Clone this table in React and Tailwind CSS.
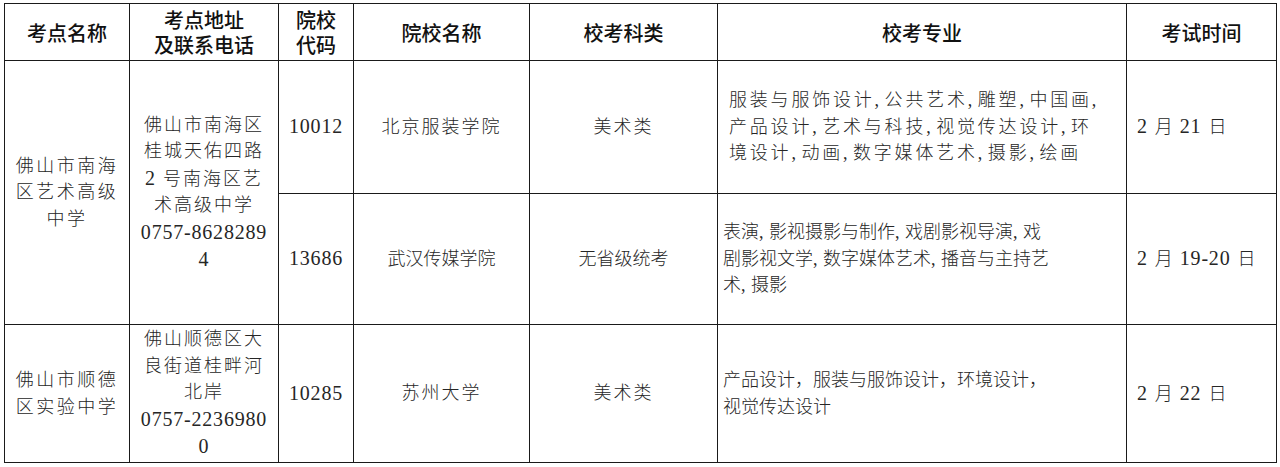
const body = "font-['Liberation_Serif','Noto_Sans_CJK_SC',serif] font-light text-[18px] leading-[26.5px] text-[#262626]";
const cell = "border border-[#1a1a1a] align-middle";

// digits in the reference run a little larger than the CJK glyphs,
// and the half-width commas take about half a glyph of room
function Txt({ t }) {
    const parts = t.split(/(\d[\d-]*|,| )/);
    return parts.map((p, i) => {
        if (p === ',') return <span key={i} className="inline-block w-[10px]">,</span>;
        if (p === ' ') return <span key={i} className="inline-block w-[7px]"> </span>;
        if (/^\d/.test(p)) return <span key={i} className="text-[20px] tracking-[0.8px]">{p}</span>;
        return <span key={i}>{p}</span>;
    });
}

function Lines({ items, className = '' }) {
    return (
        <div className={className}>
            {items.map((t, i) => (
                <div key={i}><Txt t={t} /></div>
            ))}
        </div>
    );
}

export default function App() {
    return (
        <div className="min-h-screen bg-white pt-[3px] pl-[4px]">
            <table className="table-fixed border-collapse w-[1272px]">
                <colgroup>
                    <col className="w-[125px]" />
                    <col className="w-[149px]" />
                    <col className="w-[75px]" />
                    <col className="w-[176px]" />
                    <col className="w-[188px]" />
                    <col className="w-[409px]" />
                    <col className="w-[150px]" />
                </colgroup>
                {/* header */}
                <thead>
                    <tr className="h-[57px] font-['Noto_Sans_CJK_SC',sans-serif] text-[20px] leading-[25px] text-[#111]">
                        <th className={`${cell} font-medium text-center`}>考点名称</th>
                        <th className={`${cell} font-medium text-center`}>
                            <div>考点地址</div>
                            <div>及联系电话</div>
                        </th>
                        <th className={`${cell} font-medium text-center`}>
                            <div>院校</div>
                            <div>代码</div>
                        </th>
                        <th className={`${cell} font-medium text-center`}>院校名称</th>
                        <th className={`${cell} font-medium text-center`}>校考科类</th>
                        <th className={`${cell} font-medium text-center`}>校考专业</th>
                        <th className={`${cell} font-medium text-center`}>考试时间</th>
                    </tr>
                </thead>
                <tbody className={body}>
                    <tr className="h-[133px]">
                        <td rowSpan={2} className={`${cell} text-center tracking-[2.5px]`}>
                            <Lines items={['佛山市南海', '区艺术高级', '中学']} />
                        </td>
                        <td rowSpan={2} className={`${cell} text-center tracking-[2px]`}>
                            <Lines items={['佛山市南海区', '桂城天佑四路', '2 号南海区艺', '术高级中学', '0757-8628289', '4']} />
                        </td>
                        <td className={`${cell} text-center`}><Txt t="10012" /></td>
                        <td className={`${cell} text-center tracking-[2px]`}>北京服装学院</td>
                        <td className={`${cell} text-center tracking-[2px]`}>美术类</td>
                        <td className={`${cell} pl-[11px] tracking-[2.8px]`}>
                            <Lines items={['服装与服饰设计,公共艺术,雕塑,中国画,', '产品设计,艺术与科技,视觉传达设计,环', '境设计,动画,数字媒体艺术,摄影,绘画']} />
                        </td>
                        <td className={`${cell} pl-[10px]`}><Txt t="2 月 21 日" /></td>
                    </tr>
                    <tr className="h-[131px]">
                        <td className={`${cell} text-center`}><Txt t="13686" /></td>
                        <td className={`${cell} text-center`}>武汉传媒学院</td>
                        <td className={`${cell} text-center`}>无省级统考</td>
                        <td className={`${cell} pl-[5px]`}>
                            <Lines items={['表演,影视摄影与制作,戏剧影视导演,戏', '剧影视文学,数字媒体艺术,播音与主持艺', '术,摄影']} />
                        </td>
                        <td className={`${cell} pl-[10px]`}><Txt t="2 月 19-20 日" /></td>
                    </tr>
                    <tr className="h-[138px]">
                        <td className={`${cell} text-center tracking-[2.5px]`}>
                            <Lines items={['佛山市顺德', '区实验中学']} />
                        </td>
                        <td className={`${cell} text-center tracking-[2px]`}>
                            <Lines items={['佛山顺德区大', '良街道桂畔河', '北岸', '0757-2236980', '0']} />
                        </td>
                        <td className={`${cell} text-center`}><Txt t="10285" /></td>
                        <td className={`${cell} text-center tracking-[2px]`}>苏州大学</td>
                        <td className={`${cell} text-center tracking-[2px]`}>美术类</td>
                        <td className={`${cell} pl-[5px]`}>
                            <Lines items={['产品设计，服装与服饰设计，环境设计，', '视觉传达设计']} />
                        </td>
                        <td className={`${cell} pl-[10px]`}><Txt t="2 月 22 日" /></td>
                    </tr>
                </tbody>
            </table>
        </div>
    );
}
